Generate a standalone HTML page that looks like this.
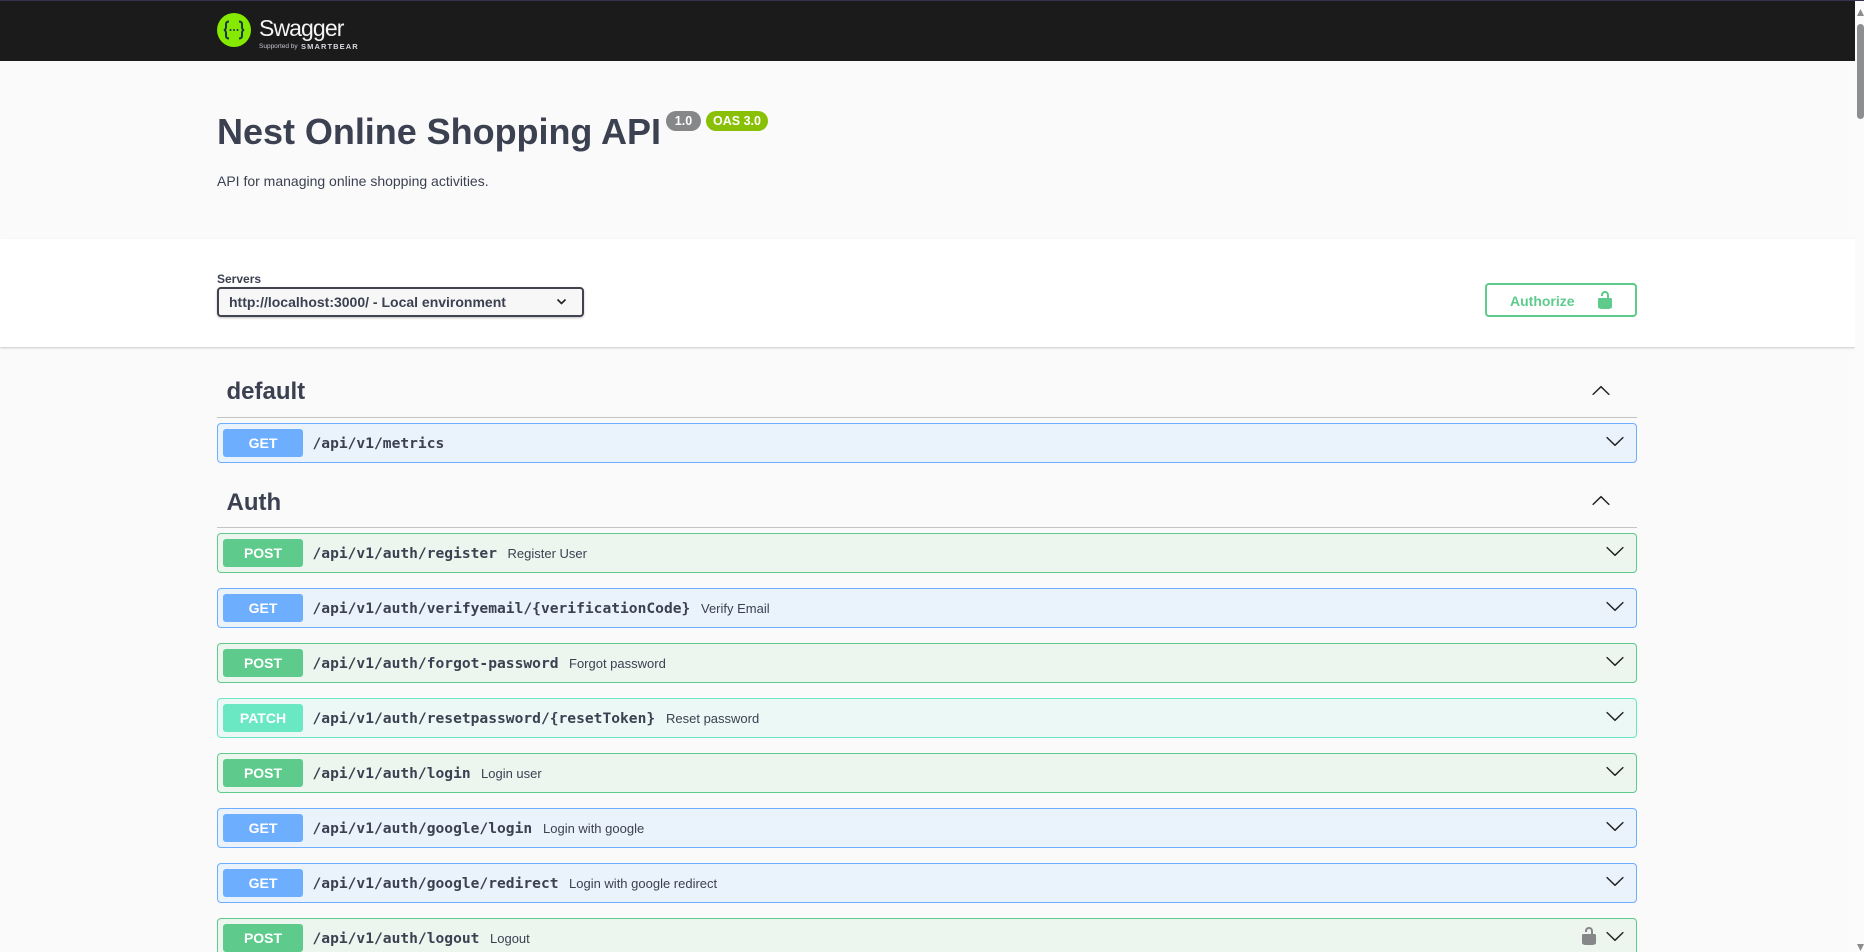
<!DOCTYPE html>
<html lang="en"><head><meta charset="utf-8"><title>Swagger UI</title>
<style>
html,body{margin:0;padding:0;width:1864px;height:952px;overflow:hidden;background:#fafafa;font-family:"Liberation Sans",Arial,sans-serif;color:#3b4151}
#w{position:relative;width:1864px;height:952px;overflow:hidden;background:#fafafa}
#w div,#w span,#w svg{position:absolute;box-sizing:border-box}
.t{white-space:nowrap}
.topbar{left:0;top:0;width:1855px;height:61px;background:#1b1b1b}
.topline{left:0;top:0;width:1864px;height:1px;background:#33334d}
.scheme{left:0;top:239px;width:1855px;height:108px;background:#fff;box-shadow:0 1px 2px rgba(0,0,0,.2)}
.sb{left:1855px;top:0;width:9px;height:952px;background:#fbfbfb}
.tag{left:226.500px;font-size:24px;font-weight:700;line-height:30px;color:#3b4151}
.rule{left:217px;width:1420px;height:1px;background:#c4c4c6}
.row{left:217px;width:1420px;height:40px;border-radius:4px;border:1px solid}
.get{background:#eaf2fc;border-color:#6eaeff}
.post{background:#ecf6ef;border-color:#5ecb8c}
.patch{background:#ebf8f5;border-color:#6ae8c4}
.m{left:5px;top:5px;width:80px;height:28px;border-radius:3px;color:#fff;font-size:14px;font-weight:700;text-align:center;line-height:29px}
.get .m{background:#6eaeff}.post .m{background:#5ecb8c}.patch .m{background:#6ae8c4}
.p{left:94.500px;top:0;line-height:40px;font-family:"DejaVu Sans Mono","Liberation Mono",monospace;font-weight:700;font-size:14.600px;color:#3b4151;white-space:nowrap}
.d{top:0;line-height:39px;font-size:13px;color:#3b4151;white-space:nowrap}
.chev{left:1387px;top:6.500px;width:20px;height:20px}
</style></head><body><div id="w">
<div class="topbar"></div>

<svg style="left:217px;top:13px" width="34" height="34" viewBox="0 0 34 34"><circle cx="17" cy="17" r="17" fill="#85ea00"/><path d="M12 8.500c-2.500 0-3 1.200-3 3v2.500c0 1.500-.8 3-2.200 3 1.400 0 2.200 1.500 2.200 3v2.500c0 1.800.5 3 3 3M22 8.500c2.500 0 3 1.200 3 3v2.500c0 1.500.8 3 2.200 3-1.400 0-2.200 1.500-2.200 3v2.500c0 1.800-.5 3-3 3" fill="none" stroke="#173646" stroke-width="2"/><circle cx="13.500" cy="17" r="1" fill="#173646"/><circle cx="17" cy="17" r="1" fill="#173646"/><circle cx="20.500" cy="17" r="1" fill="#173646"/></svg>
<div class="t" style="left:259px;top:15px;font-size:23px;line-height:26px;color:#f4f4f6;letter-spacing:-.9px">Swagger</div>
<div class="t" style="left:259px;top:42px;font-size:6.500px;line-height:10px;color:#c4c6d2">Supported by</div>
<div class="t" style="left:301px;top:41px;font-size:7.500px;line-height:11px;color:#d8d9e2;font-weight:700;letter-spacing:1.100px">SMARTBEAR</div>

<div class="t" style="left:217px;top:110px;font-size:36px;font-weight:700;line-height:44px;color:#3b4151;letter-spacing:-.03px">Nest Online Shopping API</div>
<div class="t" style="left:666px;top:111px;width:35px;height:20px;border-radius:10px;background:#858789;color:#fff;font-size:12.500px;font-weight:700;line-height:20px;text-align:center">1.0</div>
<div class="t" style="left:706px;top:111px;width:62px;height:20px;border-radius:10px;background:#89bf04;color:#fff;font-size:12.500px;font-weight:700;line-height:20px;text-align:center">OAS 3.0</div>
<div class="t" style="left:217px;top:172px;font-size:14px;line-height:18px;color:#3b4151">API for managing online shopping activities.</div>

<div class="scheme"></div>
<div class="t" style="left:217px;top:272px;font-size:12px;font-weight:700;line-height:14px;color:#3b4151">Servers</div>
<div style="left:217px;top:287px;width:367px;height:30px;border:2px solid #41444e;border-radius:4px;background:#f7f7f7;box-shadow:0 1px 2px rgba(0,0,0,.25)"></div>
<div class="t" style="left:229px;top:293px;font-size:14px;font-weight:700;line-height:18px;color:#3b4151">http://localhost:3000/ - Local environment</div>
<svg style="left:556px;top:298px" width="11" height="8" viewBox="0 0 11 8"><path d="M1.500 1.500 5.500 5.500 9.500 1.500" fill="none" stroke="#222" stroke-width="1.600"/></svg>

<div style="left:1485px;top:283px;width:152px;height:34px;border:2px solid #5ecb8c;border-radius:4px;background:#fff"></div>
<div class="t" style="left:1510px;top:293px;font-size:14px;font-weight:700;line-height:17px;color:#5ecb8c">Authorize</div>
<svg style="left:1595px;top:290px" width="20" height="20" viewBox="0 0 20 20"><path d="M15.800 8H14V5.600C14 2.703 12.665 1 10 1 7.334 1 6 2.703 6 5.600V6h2v-.801C8 3.754 8.797 3 10 3c1.203 0 2 .754 2 2.199V8H4c-.553 0-1 .646-1 1.199V17c0 .549.428 1.139.951 1.307l1.197.387C5.672 18.861 6.550 19 7.100 19h5.800c.549 0 1.428-.139 1.951-.307l1.196-.387c.524-.167.953-.757.953-1.306V9.199C17 8.646 16.352 8 15.800 8z" fill="#5ecb8c"/></svg>

<div class="t tag" style="top:377px">default</div>
<div class="rule" style="top:417px"></div>
<svg style="left:1591px;top:381px" width="20" height="20" viewBox="0 0 20 20"><path transform="rotate(180 10 10)" d="M17.418 6.109c.272-.268.709-.268.979 0s.271.701 0 .969l-7.908 7.830c-.270.268-.707.268-.979 0l-7.908-7.830c-.270-.268-.270-.701 0-.969.271-.268.709-.268.979 0L10 13.250l7.418-7.141z" fill="#222"/></svg>
<div class="row get" style="top:423px"><div class="m">GET</div><div class="p">/api/v1/metrics</div>
<svg class="chev" viewBox="0 0 20 20"><path d="M17.418 6.109c.272-.268.709-.268.979 0s.271.701 0 .969l-7.908 7.830c-.270.268-.707.268-.979 0l-7.908-7.830c-.270-.268-.270-.701 0-.969.271-.268.709-.268.979 0L10 13.250l7.418-7.141z" fill="#222"/></svg></div>

<div class="t tag" style="top:488px">Auth</div>
<div class="rule" style="top:527px"></div>
<svg style="left:1591px;top:491px" width="20" height="20" viewBox="0 0 20 20"><path transform="rotate(180 10 10)" d="M17.418 6.109c.272-.268.709-.268.979 0s.271.701 0 .969l-7.908 7.830c-.270.268-.707.268-.979 0l-7.908-7.830c-.270-.268-.270-.701 0-.969.271-.268.709-.268.979 0L10 13.250l7.418-7.141z" fill="#222"/></svg>

<div class="row post" style="top:533px"><div class="m">POST</div><div class="p">/api/v1/auth/register</div><div class="d" style="left:289.500px">Register User</div>
<svg class="chev" viewBox="0 0 20 20"><path d="M17.418 6.109c.272-.268.709-.268.979 0s.271.701 0 .969l-7.908 7.830c-.270.268-.707.268-.979 0l-7.908-7.830c-.270-.268-.270-.701 0-.969.271-.268.709-.268.979 0L10 13.250l7.418-7.141z" fill="#222"/></svg></div>
<div class="row get" style="top:588px"><div class="m">GET</div><div class="p">/api/v1/auth/verifyemail/{verificationCode}</div><div class="d" style="left:483px">Verify Email</div>
<svg class="chev" viewBox="0 0 20 20"><path d="M17.418 6.109c.272-.268.709-.268.979 0s.271.701 0 .969l-7.908 7.830c-.270.268-.707.268-.979 0l-7.908-7.830c-.270-.268-.270-.701 0-.969.271-.268.709-.268.979 0L10 13.250l7.418-7.141z" fill="#222"/></svg></div>
<div class="row post" style="top:643px"><div class="m">POST</div><div class="p">/api/v1/auth/forgot-password</div><div class="d" style="left:351px">Forgot password</div>
<svg class="chev" viewBox="0 0 20 20"><path d="M17.418 6.109c.272-.268.709-.268.979 0s.271.701 0 .969l-7.908 7.830c-.270.268-.707.268-.979 0l-7.908-7.830c-.270-.268-.270-.701 0-.969.271-.268.709-.268.979 0L10 13.250l7.418-7.141z" fill="#222"/></svg></div>
<div class="row patch" style="top:698px"><div class="m">PATCH</div><div class="p">/api/v1/auth/resetpassword/{resetToken}</div><div class="d" style="left:448px">Reset password</div>
<svg class="chev" viewBox="0 0 20 20"><path d="M17.418 6.109c.272-.268.709-.268.979 0s.271.701 0 .969l-7.908 7.830c-.270.268-.707.268-.979 0l-7.908-7.830c-.270-.268-.270-.701 0-.969.271-.268.709-.268.979 0L10 13.250l7.418-7.141z" fill="#222"/></svg></div>
<div class="row post" style="top:753px"><div class="m">POST</div><div class="p">/api/v1/auth/login</div><div class="d" style="left:263px">Login user</div>
<svg class="chev" viewBox="0 0 20 20"><path d="M17.418 6.109c.272-.268.709-.268.979 0s.271.701 0 .969l-7.908 7.830c-.270.268-.707.268-.979 0l-7.908-7.830c-.270-.268-.270-.701 0-.969.271-.268.709-.268.979 0L10 13.250l7.418-7.141z" fill="#222"/></svg></div>
<div class="row get" style="top:808px"><div class="m">GET</div><div class="p">/api/v1/auth/google/login</div><div class="d" style="left:325px">Login with google</div>
<svg class="chev" viewBox="0 0 20 20"><path d="M17.418 6.109c.272-.268.709-.268.979 0s.271.701 0 .969l-7.908 7.830c-.270.268-.707.268-.979 0l-7.908-7.830c-.270-.268-.270-.701 0-.969.271-.268.709-.268.979 0L10 13.250l7.418-7.141z" fill="#222"/></svg></div>
<div class="row get" style="top:863px"><div class="m">GET</div><div class="p">/api/v1/auth/google/redirect</div><div class="d" style="left:351px">Login with google redirect</div>
<svg class="chev" viewBox="0 0 20 20"><path d="M17.418 6.109c.272-.268.709-.268.979 0s.271.701 0 .969l-7.908 7.830c-.270.268-.707.268-.979 0l-7.908-7.830c-.270-.268-.270-.701 0-.969.271-.268.709-.268.979 0L10 13.250l7.418-7.141z" fill="#222"/></svg></div>
<div class="row post" style="top:918px"><div class="m">POST</div><div class="p">/api/v1/auth/logout</div><div class="d" style="left:272px">Logout</div>
<svg style="left:1361px;top:7px" width="20" height="20" viewBox="0 0 20 20"><path d="M15.800 8H14V5.600C14 2.703 12.665 1 10 1 7.334 1 6 2.703 6 5.600V6h2v-.801C8 3.754 8.797 3 10 3c1.203 0 2 .754 2 2.199V8H4c-.553 0-1 .646-1 1.199V17c0 .549.428 1.139.951 1.307l1.197.387C5.672 18.861 6.550 19 7.100 19h5.800c.549 0 1.428-.139 1.951-.307l1.196-.387c.524-.167.953-.757.953-1.306V9.199C17 8.646 16.352 8 15.800 8z" fill="#858789"/></svg>
<svg class="chev" viewBox="0 0 20 20"><path d="M17.418 6.109c.272-.268.709-.268.979 0s.271.701 0 .969l-7.908 7.830c-.270.268-.707.268-.979 0l-7.908-7.830c-.270-.268-.270-.701 0-.969.271-.268.709-.268.979 0L10 13.250l7.418-7.141z" fill="#222"/></svg></div>

<div class="sb"></div>
<div class="topline"></div>
<svg style="left:1857px;top:9px" width="7" height="7" viewBox="0 0 7 7"><path d="M3.500 0 7 7H0z" fill="#8a8c8e"/></svg>
<div style="left:1857px;top:24px;width:7px;height:95px;border-radius:4px;background:#8c8e8f"></div>
<svg style="left:1857px;top:944px" width="7" height="7" viewBox="0 0 7 7"><path d="M0 0h7L3.500 7z" fill="#8a8c8e"/></svg>
</div></body></html>
